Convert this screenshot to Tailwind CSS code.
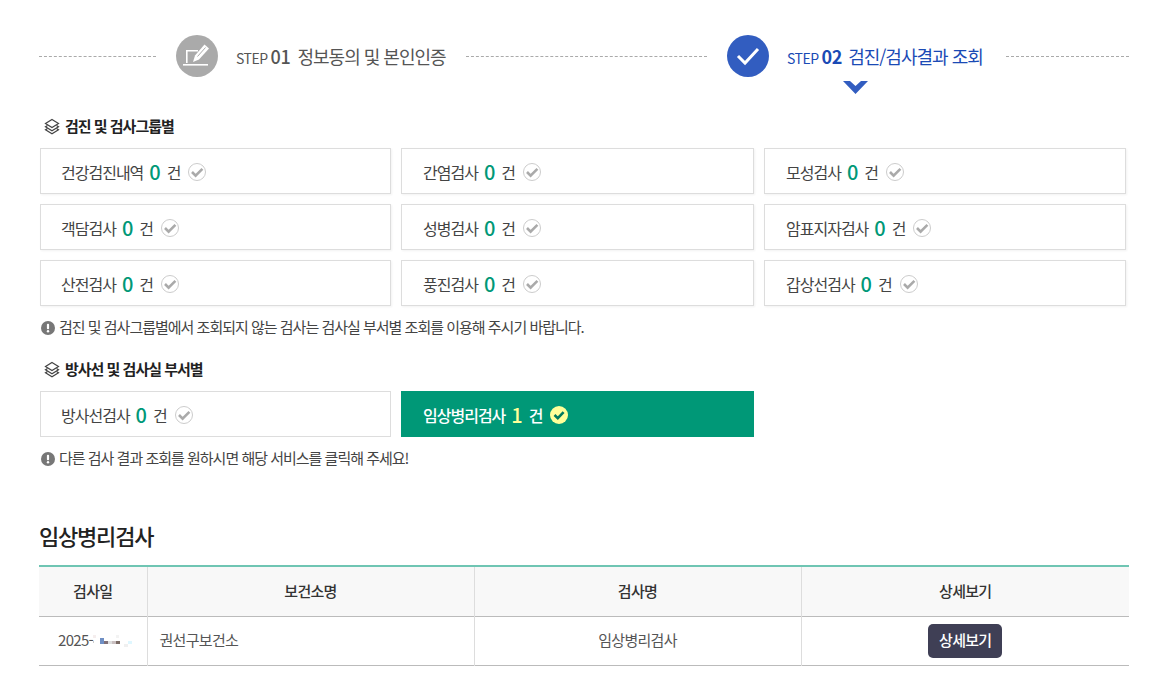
<!DOCTYPE html>
<html lang="ko">
<head>
    <meta charset="UTF-8">
    <title>검진/검사결과 조회</title>
    <script src="https://cdn.jsdelivr.net/npm/@tailwindcss/browser@4"></script>
</head>
<body class="bg-white font-['Noto_Sans_CJK_KR','Noto_Sans',sans-serif] text-[#444]">
<svg class="hidden">
    <symbol id="layers" viewBox="0 0 16 16" fill="none" stroke="#444" stroke-width="1.2">
        <path d="M8 1 L14.5 5 L8 9 L1.5 5 Z"/>
        <path d="M3.5 7 L1.5 8.2 L8 12.2 L14.5 8.2 L12.5 7"/>
        <path d="M3.5 10 L1.5 11.2 L8 15.2 L14.5 11.2 L12.5 10"/>
    </symbol>
    <symbol id="chk" viewBox="0 0 18 18">
        <circle cx="9" cy="9" r="8.5" fill="#fff" stroke="#ccc" stroke-width="1"/>
        <path d="M4 9 L7.6 12.6 L14.4 5.8" fill="none" stroke="#aaa" stroke-width="2.6"/>
    </symbol>
    <symbol id="info" viewBox="0 0 14 14">
        <circle cx="7" cy="7" r="7" fill="#777"/>
        <rect x="5.9" y="2.8" width="2.2" height="5.4" rx="1" fill="#fff"/>
        <circle cx="7" cy="10.3" r="1.2" fill="#fff"/>
    </symbol>
</svg>

<div class="w-[1090px] ml-[39px]">
    <!-- 단계 -->
    <div class="flex items-center h-[42px] mt-[35px] relative">
        <div class="w-[117px] border-t border-dashed border-[#aaa]"></div>
        <div class="w-[42px] h-[42px] ml-[20px] rounded-full bg-[#aaa] flex items-center justify-center">
            <svg width="30" height="30" viewBox="0 0 30 30" fill="none" stroke="#fff" stroke-width="1.6">
                <path d="M16 9.8 H4.8 V22"/>
                <path d="M1 23.8 H26"/>
                <path d="M11 21 L13 14.5 L22.5 3.5 L27 7.5 L17 18.5 Z" fill="#fff" stroke="none"/>
                <path d="M15.5 15.5 L23.5 6.5" stroke="#aaa" stroke-width="1"/>
            </svg>
        </div>
        <div class="ml-[18px] w-[210px] flex items-baseline whitespace-nowrap text-[#555]">
            <span class="text-[14px] tracking-[-0.5px]">STEP</span>
            <span class="text-[18px] font-medium ml-[3px] tracking-[-0.3px]">01</span>
            <span class="text-[18px] ml-[7px] tracking-[-1px]">정보동의 및 본인인증</span>
        </div>
        <div class="w-[241px] ml-[20px] border-t border-dashed border-[#aaa]"></div>
        <div class="w-[42px] h-[42px] ml-[20px] rounded-full bg-[#325dc0] flex items-center justify-center">
            <svg width="26" height="22" viewBox="0 0 26 22" fill="none" stroke="#fff" stroke-width="3"><path d="M3 11 L10 18 L23 4"/></svg>
        </div>
        <div class="ml-[18px] w-[197px] flex items-baseline whitespace-nowrap text-[#1a4ab5]">
            <span class="text-[14px] tracking-[-0.5px]">STEP</span>
            <span class="text-[18px] font-bold ml-[3px] tracking-[-0.3px]">02</span>
            <span class="text-[18px] ml-[6px] tracking-[-1px]">검진/검사결과 조회</span>
        </div>
        <div class="w-[123px] ml-[22px] border-t border-dashed border-[#aaa]"></div>
        <svg class="absolute left-[804px] top-[46px]" width="25" height="13" viewBox="0 0 25 13"><path d="M0 0 H7 L12.5 5 L18 0 H25 L12.5 13 Z" fill="#325dc0"/></svg>
    </div>

    <!-- 검진 및 검사그룹별 -->
    <h3 class="flex items-center gap-[5px] mt-[37px] h-[24px] ml-[5px] text-[15px] font-bold text-[#222] tracking-[-1px]">
        <svg width="16" height="17"><use href="#layers"/></svg>검진 및 검사그룹별
    </h3>
    <div class="grid grid-cols-[351px_353px_362px] gap-x-[10px] gap-y-[10px] ml-[1px] mt-[10px] text-[16px] tracking-[-1px]">
        <a class="h-[46px] border border-[#ddd] shadow-[1px_1px_2px_#f2f2f2] pl-[20px] pt-px flex items-center"><span>건강검진내역</span><b class="font-medium text-[20px] text-[#009877] ml-[6px] mr-[6px] tracking-normal">0</b><span>건</span><svg class="ml-[8px] mt-px" width="18" height="18"><use href="#chk"/></svg></a>
        <a class="h-[46px] border border-[#ddd] shadow-[1px_1px_2px_#f2f2f2] pl-[21px] pt-px flex items-center"><span>간염검사</span><b class="font-medium text-[20px] text-[#009877] ml-[6px] mr-[6px] tracking-normal">0</b><span>건</span><svg class="ml-[8px] mt-px" width="18" height="18"><use href="#chk"/></svg></a>
        <a class="h-[46px] border border-[#ddd] shadow-[1px_1px_2px_#f2f2f2] pl-[21px] pt-px flex items-center"><span>모성검사</span><b class="font-medium text-[20px] text-[#009877] ml-[6px] mr-[6px] tracking-normal">0</b><span>건</span><svg class="ml-[8px] mt-px" width="18" height="18"><use href="#chk"/></svg></a>
        <a class="h-[46px] border border-[#ddd] shadow-[1px_1px_2px_#f2f2f2] pl-[20px] pt-px flex items-center"><span>객담검사</span><b class="font-medium text-[20px] text-[#009877] ml-[6px] mr-[6px] tracking-normal">0</b><span>건</span><svg class="ml-[8px] mt-px" width="18" height="18"><use href="#chk"/></svg></a>
        <a class="h-[46px] border border-[#ddd] shadow-[1px_1px_2px_#f2f2f2] pl-[21px] pt-px flex items-center"><span>성병검사</span><b class="font-medium text-[20px] text-[#009877] ml-[6px] mr-[6px] tracking-normal">0</b><span>건</span><svg class="ml-[8px] mt-px" width="18" height="18"><use href="#chk"/></svg></a>
        <a class="h-[46px] border border-[#ddd] shadow-[1px_1px_2px_#f2f2f2] pl-[21px] pt-px flex items-center"><span>암표지자검사</span><b class="font-medium text-[20px] text-[#009877] ml-[6px] mr-[6px] tracking-normal">0</b><span>건</span><svg class="ml-[8px] mt-px" width="18" height="18"><use href="#chk"/></svg></a>
        <a class="h-[46px] border border-[#ddd] shadow-[1px_1px_2px_#f2f2f2] pl-[20px] pt-px flex items-center"><span>산전검사</span><b class="font-medium text-[20px] text-[#009877] ml-[6px] mr-[6px] tracking-normal">0</b><span>건</span><svg class="ml-[8px] mt-px" width="18" height="18"><use href="#chk"/></svg></a>
        <a class="h-[46px] border border-[#ddd] shadow-[1px_1px_2px_#f2f2f2] pl-[21px] pt-px flex items-center"><span>풍진검사</span><b class="font-medium text-[20px] text-[#009877] ml-[6px] mr-[6px] tracking-normal">0</b><span>건</span><svg class="ml-[8px] mt-px" width="18" height="18"><use href="#chk"/></svg></a>
        <a class="h-[46px] border border-[#ddd] shadow-[1px_1px_2px_#f2f2f2] pl-[21px] pt-px flex items-center"><span>갑상선검사</span><b class="font-medium text-[20px] text-[#009877] ml-[6px] mr-[6px] tracking-normal">0</b><span>건</span><svg class="ml-[8px] mt-px" width="18" height="18"><use href="#chk"/></svg></a>
    </div>
    <p class="flex items-center gap-[4px] ml-[2px] mt-[10px] pt-px h-[22px] text-[15px] tracking-[-1px] text-[#444]">
        <svg width="14" height="14"><use href="#info"/></svg>검진 및 검사그룹별에서 조회되지 않는 검사는 검사실 부서별 조회를 이용해 주시기 바랍니다.
    </p>

    <!-- 방사선 및 검사실 부서별 -->
    <h3 class="flex items-center gap-[5px] mt-[19px] h-[24px] ml-[5px] text-[15px] font-bold text-[#222] tracking-[-1px]">
        <svg width="16" height="17"><use href="#layers"/></svg>방사선 및 검사실 부서별
    </h3>
    <div class="grid grid-cols-[351px_353px] gap-x-[10px] ml-[1px] mt-[10px] text-[16px] tracking-[-1px]">
        <a class="h-[46px] border border-[#ddd] pl-[20px] pt-px flex items-center"><span>방사선검사</span><b class="font-medium text-[20px] text-[#009877] ml-[6px] mr-[6px] tracking-normal">0</b><span>건</span><svg class="ml-[8px] mt-px" width="18" height="18"><use href="#chk"/></svg></a>
        <a class="h-[46px] bg-[#009877] text-white font-medium pl-[22px] pt-px flex items-center"><span>임상병리검사</span><b class="font-medium text-[20px] text-[#ffff99] ml-[6px] mr-[6px] tracking-normal">1</b><span>건</span>
            <svg class="ml-[8px] mt-px" width="18" height="18" viewBox="0 0 18 18"><circle cx="9" cy="9" r="9" fill="#ffff99"/><path d="M4.5 9 L7.8 12.2 L13.6 6.2" fill="none" stroke="#007a60" stroke-width="2.6"/></svg>
        </a>
    </div>
    <p class="flex items-center gap-[4px] ml-[2px] mt-[10px] pt-px h-[22px] text-[15px] tracking-[-1px] text-[#444]">
        <svg width="14" height="14"><use href="#info"/></svg>다른 검사 결과 조회를 원하시면 해당 서비스를 클릭해 주세요!
    </p>

    <!-- 결과 -->
    <h2 class="mt-[50px] h-[32px] leading-[32px] text-[22px] font-medium text-[#222] tracking-[-1.2px]">임상병리검사</h2>
    <table class="w-full mt-[14px] table-fixed border-collapse border-t-2 border-[#6fc5b3] text-[15px] tracking-[-0.7px]">
        <colgroup>
            <col class="w-[108px]"><col class="w-[327px]"><col class="w-[327px]"><col>
        </colgroup>
        <thead>
            <tr class="h-[50px] bg-[#f8f8f8] border-b border-[#bbb] text-[#333]">
                <th class="font-medium border-r border-[#ddd]">검사일</th>
                <th class="font-medium border-r border-[#ddd]">보건소명</th>
                <th class="font-medium border-r border-[#ddd]">검사명</th>
                <th class="font-medium">상세보기</th>
            </tr>
        </thead>
        <tbody>
            <tr class="h-[49px] border-b border-[#bbb] text-[#555]">
                <td class="border-r border-[#ddd]">
                    <div class="flex items-center pl-[19px]">2025-
                        <svg width="40" height="14" viewBox="0 0 40 14" shape-rendering="crispEdges">
                            <rect x="-3" y="7" width="4" height="2" fill="#ccc"/>
                            <rect x="7" y="4" width="4" height="6" fill="#6f8fc4"/>
                            <rect x="11" y="7" width="4" height="3" fill="#7f7078"/>
                            <rect x="15" y="7" width="4" height="3" fill="#ddd"/>
                            <rect x="19" y="7" width="4" height="3" fill="#c9bfc0"/>
                            <rect x="23" y="7" width="4" height="3" fill="#7c6c66"/>
                            <rect x="35" y="7" width="4" height="3" fill="#dff7ff"/>
                            <rect x="31" y="10" width="4" height="3" fill="#f0f0f0"/>
                            <rect x="0" y="1" width="3" height="3" fill="#f5eeee"/>
                            <rect x="23" y="1" width="3" height="3" fill="#f3f3f3"/>
                        </svg>
                    </div>
                </td>
                <td class="border-r border-[#ddd] pl-[12px]">권선구보건소</td>
                <td class="border-r border-[#ddd] text-center">임상병리검사</td>
                <td class="text-center"><button class="w-[74px] h-[34px] rounded-[5px] bg-[#3f3f55] text-white font-medium">상세보기</button></td>
            </tr>
        </tbody>
    </table>
</div>
</body>
</html>
